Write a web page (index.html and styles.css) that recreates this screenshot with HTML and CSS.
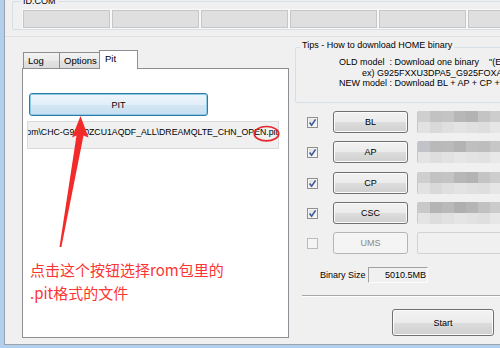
FILE: index.html
```html
<!DOCTYPE html>
<html>
<head>
<meta charset="utf-8">
<link rel="stylesheet" href="styles.css">
</head>
<body>
<div class="window">
  <div class="client">
    <div class="top">
      <div class="grp idcom">
        <span class="grp-label">ID:COM</span>
        <div class="ports">
          <div class="port"></div><div class="port"></div><div class="port"></div>
          <div class="port"></div><div class="port"></div><div class="port"></div>
        </div>
      </div>
    </div>
    <div class="main">
      <div class="left">
        <div class="tabs">
          <div class="tab t-log">Log</div>
          <div class="tab t-opt">Options</div>
          <div class="tab t-pit active">Pit</div>
        </div>
        <div class="panel">
          <button class="pitbtn">PIT</button>
          <div class="path"><span>D:\rom\CHC-G9500ZCU1AQDF_ALL\DREAMQLTE_CHN_OPEN.pit</span></div>
          <p class="note">点击这个按钮选择rom包里的<br>.pit格式的文件</p>
        </div>
      </div>
      <div class="right">
        <div class="grp tips">
          <span class="grp-label">Tips - How to download HOME binary</span>
          <div class="tipline">OLD model&nbsp; : Download one binary&nbsp;&nbsp;&nbsp; "(Example)</div>
          <div class="tipline ex">ex) G925FXXU3DPA5_G925FOXA3DPA5_HOME.tar.md5</div>
          <div class="tipline">NEW model : Download BL + AP + CP + HOME_CSC</div>
        </div>
        <div class="files">
          <div class="row">
            <div class="chk on"><svg width="9" height="9" viewBox="0 0 9 9"><path d="M1.6 4.6 L3.6 7.2 L7.6 1.4" fill="none" stroke="#3d5894" stroke-width="1.6"/></svg></div>
            <button class="btn fbtn">BL</button>
            <div class="field blur b1"></div>
          </div>
          <div class="row">
            <div class="chk on"><svg width="9" height="9" viewBox="0 0 9 9"><path d="M1.6 4.6 L3.6 7.2 L7.6 1.4" fill="none" stroke="#3d5894" stroke-width="1.6"/></svg></div>
            <button class="btn fbtn">AP</button>
            <div class="field blur b2"></div>
          </div>
          <div class="row">
            <div class="chk on"><svg width="9" height="9" viewBox="0 0 9 9"><path d="M1.6 4.6 L3.6 7.2 L7.6 1.4" fill="none" stroke="#3d5894" stroke-width="1.6"/></svg></div>
            <button class="btn fbtn">CP</button>
            <div class="field blur b1"></div>
          </div>
          <div class="row">
            <div class="chk on"><svg width="9" height="9" viewBox="0 0 9 9"><path d="M1.6 4.6 L3.6 7.2 L7.6 1.4" fill="none" stroke="#3d5894" stroke-width="1.6"/></svg></div>
            <button class="btn fbtn">CSC</button>
            <div class="field blur b3"></div>
          </div>
          <div class="row">
            <div class="chk off"></div>
            <button class="btn fbtn disabled">UMS</button>
            <div class="field empty"></div>
          </div>
        </div>
        <div class="size">
          <span class="size-label">Binary Size</span>
          <span class="size-val">5010.5MB</span>
        </div>
        <div class="sep"></div>
        <button class="btn start">Start</button>
      </div>
    </div>
  </div>
  <svg class="annot" width="500" height="348" viewBox="0 0 500 348">
    <polygon points="80.5,116 88.5,137.5 83.5,135.5 61.4,247 59.5,247 76.5,135.5 72,137.5" fill="#f22a2a"/>
    <ellipse cx="266.5" cy="133.7" rx="12.3" ry="7.2" fill="none" stroke="#e8262a" stroke-width="1.6"/>
  </svg>
</div>
</body>
</html>
```
FILE: styles.css
```css
* { box-sizing: border-box; }
html, body { margin: 0; padding: 0; }
body {
  width: 500px; height: 348px; overflow: hidden;
  font-family: "Liberation Sans", Arial, sans-serif; font-size: 9px; color: #000;
  background: #b3cfee;
}
.window { position: relative; width: 500px; height: 348px; overflow: hidden; background: #b3cfee; }
.client {
  display: flow-root;
  margin-left: 4px; width: 496px; height: 345px; background: #f0f0f0;
  border-left: 1px solid #9aa3ad; border-bottom: 1px solid #9aa3ad;
}
.top { display: flow-root; height: 37px; border-bottom: 1px solid #e2e2e2; padding: 1px 0 0 7px; }

.grp { position: relative; border: 1px solid #d5dfe5; border-radius: 2px; }
.grp-label {
  position: absolute; padding: 0 2px; background: #f0f0f0;
  white-space: nowrap; line-height: 11px; font-size: 9px;
}
.idcom { height: 29px; margin-right: -12px; padding: 8px 0 0 10px; }
.idcom .grp-label { top: -6px; left: 8px; line-height: 10px; }
.ports { display: flex; gap: 2px; }
.port {
  width: 87px; height: 18px; flex: none; background: #dfdfdf;
  border: 1px solid #c6c6c6; box-shadow: 0 0 0 1px #f8f8f8;
}

.main { display: flex; align-items: flex-start; }
.left { margin-left: 17px; width: 267px; padding-top: 13px; flex: none; }
.tabs { display: flex; align-items: flex-end; height: 18px; padding-left: 1px; position: relative; z-index: 1; }
.tab {
  height: 16px; border: 1px solid #8c8e94; border-bottom: none;
  background: linear-gradient(#f3f3f3, #ebebeb 50%, #e2e2e2 51%, #dcdcdc);
  padding-left: 4px; line-height: 15px; font-size: 9.5px; flex: none;
}
.tab + .tab { margin-left: -1px; }
.t-log { width: 37px; }
.t-opt { width: 41px; }
.t-pit { width: 39px; }
.tab.active { height: 19px; margin-bottom: -1px; background: #fff; padding-left: 5px; line-height: 15px; }
.panel { height: 270px; border: 1px solid #8c8e94; background: #fff; overflow: hidden; }

.pitbtn {
  display: block; margin: 24px 0 0 6px; width: 179px; height: 23px; padding: 0;
  border: 1px solid #2f7aa8; border-radius: 3px;
  background: linear-gradient(#eef5fb, #e2eef8 50%, #d3e6f4 51%, #c8dfef);
  box-shadow: inset 0 0 0 1px #8fcbe9;
  font-family: "Liberation Sans", Arial, sans-serif; font-size: 9px; color: #000;
}
.path {
  margin: 5px 0 0 4px; width: 252px; height: 28px; background: #f0f0f0;
  border: 1px solid #dadada; display: flex; justify-content: flex-end; overflow: hidden;
  padding: 5px 0 0 0; font-size: 8.75px; line-height: 10px; white-space: nowrap;
}
.path span { flex: none; }
.note {
  margin: 109px 0 0 7px; font-family: "Noto Sans CJK SC", sans-serif;
  font-size: 15px; line-height: 23px; color: #fb3434;
}

.right { margin-left: 6px; flex: none; width: 212px; }
.tips { margin-top: 10px; height: 56px; padding-top: 9px; }
.tips .grp-label { top: -8px; left: 4px; }
.tipline { margin-left: 43px; line-height: 10.5px; white-space: nowrap; }
.tipline.ex { margin-left: 66px; }

.files { margin-top: 8px; padding-left: 12px; display: flex; flex-direction: column; gap: 8.25px; }
.row { display: flex; align-items: center; height: 22px; }
.chk {
  width: 11px; height: 11px; flex: none; border: 1px solid #8e8f8f;
  background: linear-gradient(135deg, #dcdcdc, #fbfbfb);
  box-shadow: inset 0 0 0 1px #f4f4f4;
  display: flex; align-items: center; justify-content: center; margin-top: 1px;
}
.chk svg { display: block; }
.chk.off { border-color: #bcbcbc; background: #f4f4f4; box-shadow: none; }
.btn {
  padding: 0; border: 1px solid #707070; border-radius: 3px;
  background: linear-gradient(#f2f2f2, #ebebeb 50%, #dddddd 51%, #cfcfcf);
  box-shadow: inset 0 0 0 1px #fbfbfb;
  font-family: "Liberation Sans", Arial, sans-serif; font-size: 9px; color: #000;
}
.fbtn { margin-left: 15px; width: 75px; height: 22px; flex: none; }
.btn.disabled { border-color: #b3b6b9; background: #f4f4f4; box-shadow: none; color: #8a8a8a; }
.field { margin-left: 9px; width: 92px; height: 22px; flex: none; border-radius: 2px; }
.field.empty { border: 1px solid #d2d2d2; background: #f0f0f0; }
.blur { border-left: 1px solid #c9c9c9; }
.b1 {
  background:
    linear-gradient(to right, #cfcfcf 0 12px, #c2c2c2 12px 24px, #c4c4c4 24px 36px, #b7b7b7 36px 48px, #b3b3b3 48px 60px, #c4c4c4 60px 72px, #cdcdcd 72px) top / 100% 50% no-repeat,
    linear-gradient(to right, #e2e2e2 0 12px, #d9d9d9 12px 24px, #dfdfdf 24px 36px, #e3e3e3 36px 48px, #e0e0e0 48px 60px, #dedede 60px 72px, #e6e6e6 72px) bottom / 100% 50% no-repeat;
}
.b2 {
  background:
    linear-gradient(to right, #c2c2ca 0 12px, #b9b9b9 12px 24px, #bababa 24px 36px, #b3b3b3 36px 48px, #bfbfbf 48px 60px, #bdbdbd 60px 72px, #c7c7c7 72px) top / 100% 50% no-repeat,
    linear-gradient(to right, #e4e4e4 0 12px, #dedede 12px 24px, #e2e2e2 24px 36px, #e6e6e6 36px 48px, #e3e3e3 48px 60px, #e1e1e1 60px 72px, #e8e8e8 72px) bottom / 100% 50% no-repeat;
}
.b3 {
  background:
    linear-gradient(to right, #c9c9c9 0 12px, #b4b4b4 12px 24px, #b9b9b9 24px 36px, #afafaf 36px 48px, #b5b5b5 48px 60px, #c1c1c1 60px 72px, #cbcbcb 72px) top / 100% 50% no-repeat,
    linear-gradient(to right, #e4e4e4 0 12px, #dddddd 12px 24px, #e1e1e1 24px 36px, #e5e5e5 36px 48px, #e2e2e2 48px 60px, #dfdfdf 60px 72px, #e7e7e7 72px) bottom / 100% 50% no-repeat;
}

.size { display: flex; align-items: center; margin: 13px 0 0 25px; }
.size-label { width: 44px; white-space: nowrap; }
.size-val {
  margin-left: 4px; width: 60px; height: 16px; border: 1px solid;
  border-color: #a0a0a0 #fdfdfd #fdfdfd #a0a0a0; text-align: right;
  padding-right: 1px; line-height: 14px;
}
.sep { margin: 12px 0 0 7px; height: 1px; background: #a8a8a8; box-shadow: 0 1px #fff; }
.start { display: block; margin: 13px 0 0 97px; width: 102px; height: 27px; }

.annot { position: absolute; left: 0; top: 0; pointer-events: none; }
```
